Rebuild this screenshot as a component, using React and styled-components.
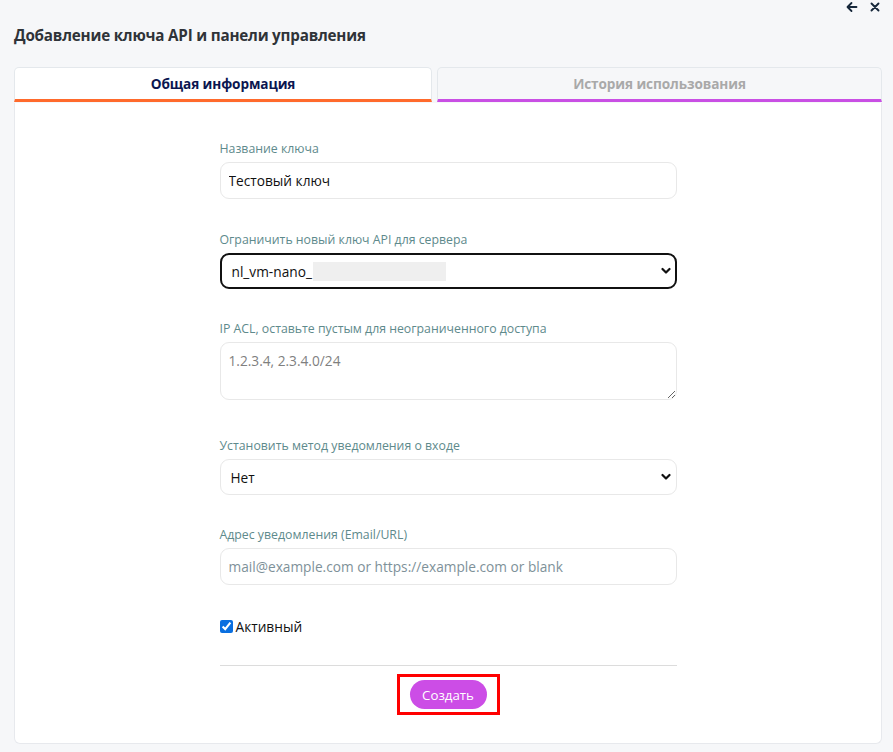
import React from "react";
import styled, { createGlobalStyle } from "styled-components";

const GlobalStyle = createGlobalStyle`
  html, body {
    margin: 0;
    padding: 0;
    background: #f6f7f9;
  }
  body {
    font-family: "Open Sans", "Noto Sans", Arial, sans-serif;
    color: #222;
  }
  * { box-sizing: border-box; }
`;

const Page = styled.div`
  width: 893px;
  height: 752px;
  padding: 0 11px 8px 14px;
  display: flex;
  flex-direction: column;
`;

const TopBar = styled.div`
  height: 13px;
  display: flex;
  justify-content: flex-end;
  align-items: center;
  gap: 11px;
  padding: 0 1px 0 0;
`;

const IconButton = styled.button`
  border: 0;
  background: none;
  padding: 0;
  width: 12px;
  height: 12px;
  display: flex;
  align-items: center;
  justify-content: center;
  color: #16273a;
  cursor: pointer;
`;

const Title = styled.h1`
  margin: 13px 0 0 0;
  font-size: 15.2px;
  font-weight: 700;
  line-height: 18px;
  color: #2f3338;
  letter-spacing: -0.2px;
`;

const Tabs = styled.div`
  margin-top: 23px;
  display: grid;
  grid-template-columns: 418fr 445fr;
  gap: 5px;
`;

const Tab = styled.button`
  height: 35px;
  border: 1px solid #e4e8ec;
  border-bottom: 3px solid ${(p) => p.$accent};
  border-radius: 5px 5px 0 0;
  background: ${(p) => (p.$active ? "#ffffff" : "#f6f7f9")};
  color: ${(p) => (p.$active ? "#0b1650" : "#a9a9a9")};
  font-family: inherit;
  font-size: 13.6px;
  font-weight: 700;
  letter-spacing: -0.1px;
  padding: 0;
  cursor: pointer;
`;

const Panel = styled.div`
  flex: 1;
  margin-top: 1px;
  background: #ffffff;
  border: 1px solid #e7e9ed;
  border-top: 0;
  border-radius: 0 0 6px 6px;
  display: flex;
  justify-content: center;
  padding-top: 37px;
`;

const Form = styled.form`
  width: 457px;
  display: flex;
  flex-direction: column;
`;

const Field = styled.div`
  display: flex;
  flex-direction: column;
  gap: 4px;
  margin-bottom: ${(p) => p.$space || 31}px;
`;

const Label = styled.label`
  font-size: 12.3px;
  line-height: 18px;
  color: #5e8a8c;
`;

const TextInput = styled.input`
  height: 37px;
  width: 100%;
  border: 1px solid #e8e8e8;
  border-radius: 9px;
  padding: 0 8px;
  font-family: inherit;
  font-size: 13.7px;
  color: #111;
  outline: none;
  &::placeholder {
    color: #7e9199;
  }
`;

const TextArea = styled.textarea`
  display: block;
  height: 58px;
  width: 100%;
  border: 1px solid #e8e8e8;
  border-radius: 9px;
  padding: 9px 8px;
  font-family: inherit;
  font-size: 13.7px;
  line-height: 18px;
  color: #111;
  outline: none;
  resize: vertical;
  &::placeholder {
    color: #7f7f7f;
  }
`;

const SelectBox = styled.div`
  height: 36px;
  display: flex;
  align-items: center;
  border: ${(p) => (p.$focused ? "2px solid #111" : "1px solid #e8e8e8")};
  border-radius: 9px;
  padding: ${(p) => (p.$focused ? "0 4px 0 10px" : "0 5px 0 10px")};
  font-size: 13.7px;
  color: #111;
  cursor: pointer;
`;

const Redacted = styled.span`
  display: inline-block;
  width: 133px;
  height: 19px;
  background: #efefef;
  margin-left: 1px;
`;

const Chevron = styled.svg`
  margin-left: auto;
  flex: none;
`;

const CheckRow = styled.label`
  display: flex;
  align-items: center;
  gap: 3px;
  font-size: 13.7px;
  color: #111;
  height: 20px;
`;

const CheckBox = styled.input`
  margin: 0;
  width: 13px;
  height: 13px;
  accent-color: #0a6fe0;
`;

const Divider = styled.hr`
  border: 0;
  border-top: 1px solid #dcdcdc;
  margin: 29px 0 8px 0;
  width: 100%;
`;

const Actions = styled.div`
  display: flex;
  justify-content: center;
`;

const Highlight = styled.div`
  border: 3px solid #ff0000;
  padding: 3px 10px;
  display: flex;
`;

const PrimaryButton = styled.button`
  height: 29px;
  width: 77px;
  border: 0;
  border-radius: 15px;
  background: #cc4de6;
  color: #ffffff;
  font-family: inherit;
  font-size: 13.3px;
  cursor: pointer;
`;

const ChevronDown = () => (
  <Chevron width="10" height="8" viewBox="0 0 10 8">
    <path d="M1.5 2 L5 5.5 L8.5 2" fill="none" stroke="#111" strokeWidth="2.2" strokeLinecap="round" strokeLinejoin="round" />
  </Chevron>
);

export default function App() {
  return (
    <>
      <GlobalStyle />
      <Page>
        <TopBar>
          <IconButton aria-label="Назад">
            <svg width="12" height="12" viewBox="0 0 12 12">
              <path d="M10.5 6 H1.8 M5.5 2 L1.5 6 L5.5 10" fill="none" stroke="currentColor" strokeWidth="1.8" strokeLinecap="round" strokeLinejoin="round" />
            </svg>
          </IconButton>
          <IconButton aria-label="Закрыть">
            <svg width="10" height="10" viewBox="0 0 10 10">
              <path d="M1.5 1.5 L8.5 8.5 M8.5 1.5 L1.5 8.5" fill="none" stroke="currentColor" strokeWidth="1.9" strokeLinecap="round" />
            </svg>
          </IconButton>
        </TopBar>
        <Title>Добавление ключа API и панели управления</Title>
        <Tabs>
          <Tab $active $accent="#ff6a2c">Общая информация</Tab>
          <Tab $accent="#c94fe4">История использования</Tab>
        </Tabs>
        <Panel>
          <Form onSubmit={(e) => e.preventDefault()}>
            <Field $space={32}>
              <Label>Название ключа</Label>
              <TextInput defaultValue="Тестовый ключ" />
            </Field>
            <Field>
              <Label>Ограничить новый ключ API для сервера</Label>
              <SelectBox $focused role="combobox">
                <span>nl_vm-nano_</span>
                <Redacted />
                <ChevronDown />
              </SelectBox>
            </Field>
            <Field $space={37}>
              <Label>IP ACL, оставьте пустым для неограниченного доступа</Label>
              <TextArea placeholder="1.2.3.4, 2.3.4.0/24" />
            </Field>
            <Field>
              <Label>Установить метод уведомления о входе</Label>
              <SelectBox role="combobox">
                <span>Нет</span>
                <ChevronDown />
              </SelectBox>
            </Field>
            <Field>
              <Label>Адрес уведомления (Email/URL)</Label>
              <TextInput placeholder="mail@example.com or https://example.com or blank" />
            </Field>
            <CheckRow>
              <CheckBox type="checkbox" defaultChecked />
              Активный
            </CheckRow>
            <Divider />
            <Actions>
              <Highlight>
                <PrimaryButton type="submit">Создать</PrimaryButton>
              </Highlight>
            </Actions>
          </Form>
        </Panel>
      </Page>
    </>
  );
}
